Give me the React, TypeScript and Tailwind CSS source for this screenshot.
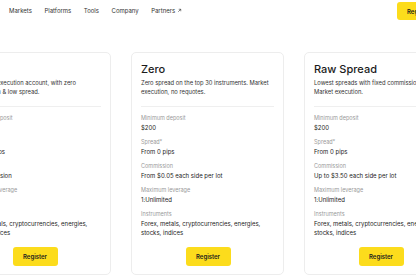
import React from "react";

type Account = {
  name: string;
  desc: string;
  rows: { label: string; value: string }[];
};

const accounts: Account[] = [
  {
    name: "Pro",
    desc: "An instant execution account, with zero commission & low spread.",
    rows: [
      { label: "Minimum deposit", value: "$200" },
      { label: "Spread*", value: "From 0.1 pips" },
      { label: "Commission", value: "No commission" },
      { label: "Maximum leverage", value: "1:Unlimited" },
      { label: "Instruments", value: "Forex, metals, cryptocurrencies, energies, stocks, indices" },
    ],
  },
  {
    name: "Zero",
    desc: "Zero spread on the top 30 instruments. Market execution, no requotes.",
    rows: [
      { label: "Minimum deposit", value: "$200" },
      { label: "Spread*", value: "From 0 pips" },
      { label: "Commission", value: "From $0.05 each side per lot" },
      { label: "Maximum leverage", value: "1:Unlimited" },
      { label: "Instruments", value: "Forex, metals, cryptocurrencies, energies, stocks, indices" },
    ],
  },
  {
    name: "Raw Spread",
    desc: "Lowest spreads with fixed commission per lot. Market execution.",
    rows: [
      { label: "Minimum deposit", value: "$200" },
      { label: "Spread*", value: "From 0 pips" },
      { label: "Commission", value: "Up to $3.50 each side per lot" },
      { label: "Maximum leverage", value: "1:Unlimited" },
      { label: "Instruments", value: "Forex, metals, cryptocurrencies, energies, stocks, indices" },
    ],
  },
];

function Card({ acc }: { acc: Account }) {
  return (
    <div className="flex h-[223px] w-[153px] shrink-0 flex-col rounded-[5px] border border-[#ededed] bg-white pr-[8px] pl-[9px] pt-[9px] pb-[8px]">
      <h3 className="text-[11px] leading-[14px] font-medium text-[#1b1b1b]">{acc.name}</h3>
      <p className="mt-[1.5px] text-[5.8px] leading-[9px] text-[#333]">{acc.desc}</p>
      <div className="mt-[10px] mr-[1px] border-t border-[#efefef]" />
      <div className="mt-[7px] flex flex-col gap-[5.5px]">
        {acc.rows.map((r) => (
          <div key={r.label}>
            <div className="text-[5.5px] leading-[8px] text-[#9a9a9a]">{r.label}</div>
            <div className="mt-[1.5px] text-[6px] leading-[9px] text-[#222]">{r.value}</div>
          </div>
        ))}
      </div>
      <div className="mt-auto flex justify-center">
        <button className="h-[19px] w-[45px] rounded-[3px] bg-[#fcdc1c] text-[6px] font-semibold text-[#1d1d1d]">
          Register
        </button>
      </div>
    </div>
  );
}

export default function App() {
  return (
    <div className="h-[280px] w-[416px] overflow-hidden bg-white font-['Inter',sans-serif]">
      <header className="flex h-[22px] items-start">
        <nav className="mt-[6px] ml-[9px] flex gap-[12.5px] text-[6px] leading-[9px] text-[#333]">
          <a>Markets</a>
          <a>Platforms</a>
          <a>Tools</a>
          <a>Company</a>
          <a className="flex items-center gap-[2px]">
            Partners
            <svg viewBox="0 0 10 10" className="h-[5px] w-[5px]" fill="none" stroke="currentColor" strokeWidth="1.2">
              <path d="M2.5 7.5 7.5 2.5M3.5 2.5h4v4" />
            </svg>
          </a>
        </nav>
        <button className="mt-[2px] ml-auto -mr-[26px] h-[18px] w-[45px] shrink-0 rounded-[3px] bg-[#fcdc1c] text-left pl-[10px] text-[6px] font-semibold text-[#1d1d1d]">
          Register
        </button>
      </header>
      <div className="mt-[30px] -ml-[42px] flex gap-[20px]">
        {accounts.map((a) => (
          <Card key={a.name} acc={a} />
        ))}
      </div>
    </div>
  );
}
